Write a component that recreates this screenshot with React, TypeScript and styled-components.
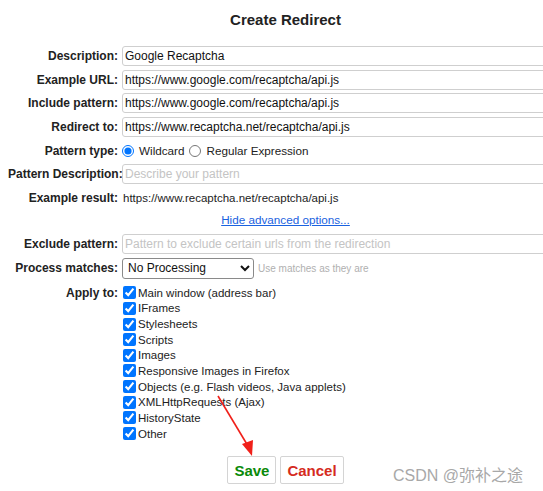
import React from "react";
import styled, { createGlobalStyle } from "styled-components";

const GlobalStyle = createGlobalStyle`
  html, body {
    margin: 0;
    background: #fff;
    overflow: hidden;
  }
  body {
    padding: 8px;
    font-family: "Liberation Sans", Arial, sans-serif;
    color: #1a1a1a;
  }
`;

const applyTargets = [
  "Main window (address bar)",
  "IFrames",
  "Stylesheets",
  "Scripts",
  "Images",
  "Responsive Images in Firefox",
  "Objects (e.g. Flash videos, Java applets)",
  "XMLHttpRequests (Ajax)",
  "HistoryState",
  "Other",
];

const App = () => {
  return (
    <>
      <GlobalStyle />
      <Page>
        <Title>Create Redirect</Title>
        <FormGrid>
          <Label>Description:</Label>
          <TextInput defaultValue="Google Recaptcha" />

          <Label>Example URL:</Label>
          <TextInput defaultValue="https://www.google.com/recaptcha/api.js" />

          <Label>Include pattern:</Label>
          <TextInput defaultValue="https://www.google.com/recaptcha/api.js" />

          <Label>Redirect to:</Label>
          <TextInput defaultValue="https://www.recaptcha.net/recaptcha/api.js" />

          <Label>Pattern type:</Label>
          <Cell>
            <RadioLabel>
              <Radio type="radio" name="ptype" defaultChecked />
              Wildcard
            </RadioLabel>
            <RadioLabel>
              <Radio type="radio" name="ptype" />
              Regular Expression
            </RadioLabel>
          </Cell>

          <Label>Pattern Description:</Label>
          <TextInput placeholder="Describe your pattern" />

          <Label>Example result:</Label>
          <Cell>
            <ResultText>https://www.recaptcha.net/recaptcha/api.js</ResultText>
          </Cell>

          <LinkRow>
            <AdvancedLink href="#">Hide advanced options...</AdvancedLink>
          </LinkRow>

          <Label>Exclude pattern:</Label>
          <TextInput placeholder="Pattern to exclude certain urls from the redirection" />

          <Label>Process matches:</Label>
          <Cell $tall>
            <Select defaultValue="none">
              <option value="none">No Processing</option>
            </Select>
            <Hint>Use matches as they are</Hint>
          </Cell>

          <Label $top>Apply to:</Label>
          <CheckList>
            {applyTargets.map((t) => (
              <CheckItem key={t}>
                <Checkbox type="checkbox" defaultChecked />
                {t}
              </CheckItem>
            ))}
          </CheckList>
        </FormGrid>

        <ButtonRow>
          <Button $color="#0a8a0a">Save</Button>
          <Button $color="#d52b1e">Cancel</Button>
        </ButtonRow>
      </Page>

      <Arrow width="60" height="70" viewBox="0 0 60 70">
        <line x1="4" y1="2" x2="34" y2="52" stroke="#f0201a" strokeWidth="1.6" />
        <polygon points="28,50 39,46 38,62" fill="#f0201a" />
      </Arrow>
      <Watermark>CSDN @弥补之途</Watermark>
    </>
  );
};

export default App;

// styled components

const Page = styled.div`
  width: 555px;
`;

const Title = styled.h1`
  margin: 0 0 14px;
  font-size: 15px;
  line-height: 24px;
  font-weight: bold;
  text-align: center;
  color: #222;
`;

const FormGrid = styled.div`
  display: grid;
  grid-template-columns: 110px 1fr;
  column-gap: 4px;
  row-gap: 3.7px;
  align-items: center;
`;

const Label = styled.div<{ $top?: boolean }>`
  align-self: ${(p) => (p.$top ? "start" : "center")};
  margin-top: ${(p) => (p.$top ? "2px" : "0")};
  text-align: right;
  font-size: 12px;
  font-weight: bold;
  color: #222;
  white-space: nowrap;
  line-height: 16px;
`;

const Cell = styled.div<{ $tall?: boolean }>`
  display: flex;
  align-items: center;
  height: ${(p) => (p.$tall ? "22px" : "20px")};
  font-size: 11.7px;
`;

const TextInput = styled.input`
  box-sizing: border-box;
  height: 20px;
  width: 100%;
  padding: 0 2px;
  border: 1px solid #cfcfcf;
  border-radius: 3px;
  font-family: "Liberation Sans", Arial, sans-serif;
  font-size: 12px;
  color: #111;
  outline: none;

  &::placeholder {
    color: #c4c4c4;
  }
`;

const RadioLabel = styled.label`
  display: flex;
  align-items: center;
  margin-right: 5px;
  color: #222;
`;

const Radio = styled.input`
  width: 12px;
  height: 12px;
  margin: 0 5px 0 0;
  accent-color: #0075ff;
`;

const ResultText = styled.span`
  padding-left: 1px;
  font-size: 11.5px;
  color: #222;
`;

const LinkRow = styled.div`
  grid-column: 1 / -1;
  text-align: center;
  height: 18px;
  line-height: 14px;
`;

const AdvancedLink = styled.a`
  font-size: 11.7px;
  color: #1a62e0;
  text-decoration: underline;
`;

const Select = styled.select`
  box-sizing: border-box;
  width: 132px;
  height: 21px;
  border: 1px solid #8a8a8a;
  border-radius: 3px;
  background: #fff;
  font-family: "Liberation Sans", Arial, sans-serif;
  font-size: 12px;
  color: #111;
  padding: 0 1px;
`;

const Hint = styled.span`
  margin-left: 4px;
  font-size: 10px;
  color: #b0b0b0;
`;

const CheckList = styled.div`
  display: flex;
  flex-direction: column;
  margin-top: 2px;
`;

const CheckItem = styled.label`
  display: flex;
  align-items: center;
  height: 15.67px;
  font-size: 11.5px;
  color: #222;
  white-space: nowrap;
`;

const Checkbox = styled.input`
  width: 13px;
  height: 13px;
  margin: 0 2px 0 1px;
  accent-color: #0075ff;
`;

const ButtonRow = styled.div`
  display: flex;
  justify-content: center;
  gap: 4px;
  margin-top: 15px;
`;

const Button = styled.button<{ $color: string }>`
  height: 28px;
  padding: 0 6px;
  background: #fff;
  border: 1px solid #d4d4d4;
  border-radius: 2px;
  font-family: "Liberation Sans", Arial, sans-serif;
  font-size: 15px;
  font-weight: bold;
  color: ${(p) => p.$color};
`;

const Arrow = styled.svg`
  position: absolute;
  left: 214px;
  top: 394px;
`;

const Watermark = styled.div`
  position: absolute;
  left: 393px;
  top: 462px;
  font-family: "Liberation Sans", "Noto Sans CJK SC", sans-serif;
  font-size: 16px;
  color: #a8a8a8;
`;
